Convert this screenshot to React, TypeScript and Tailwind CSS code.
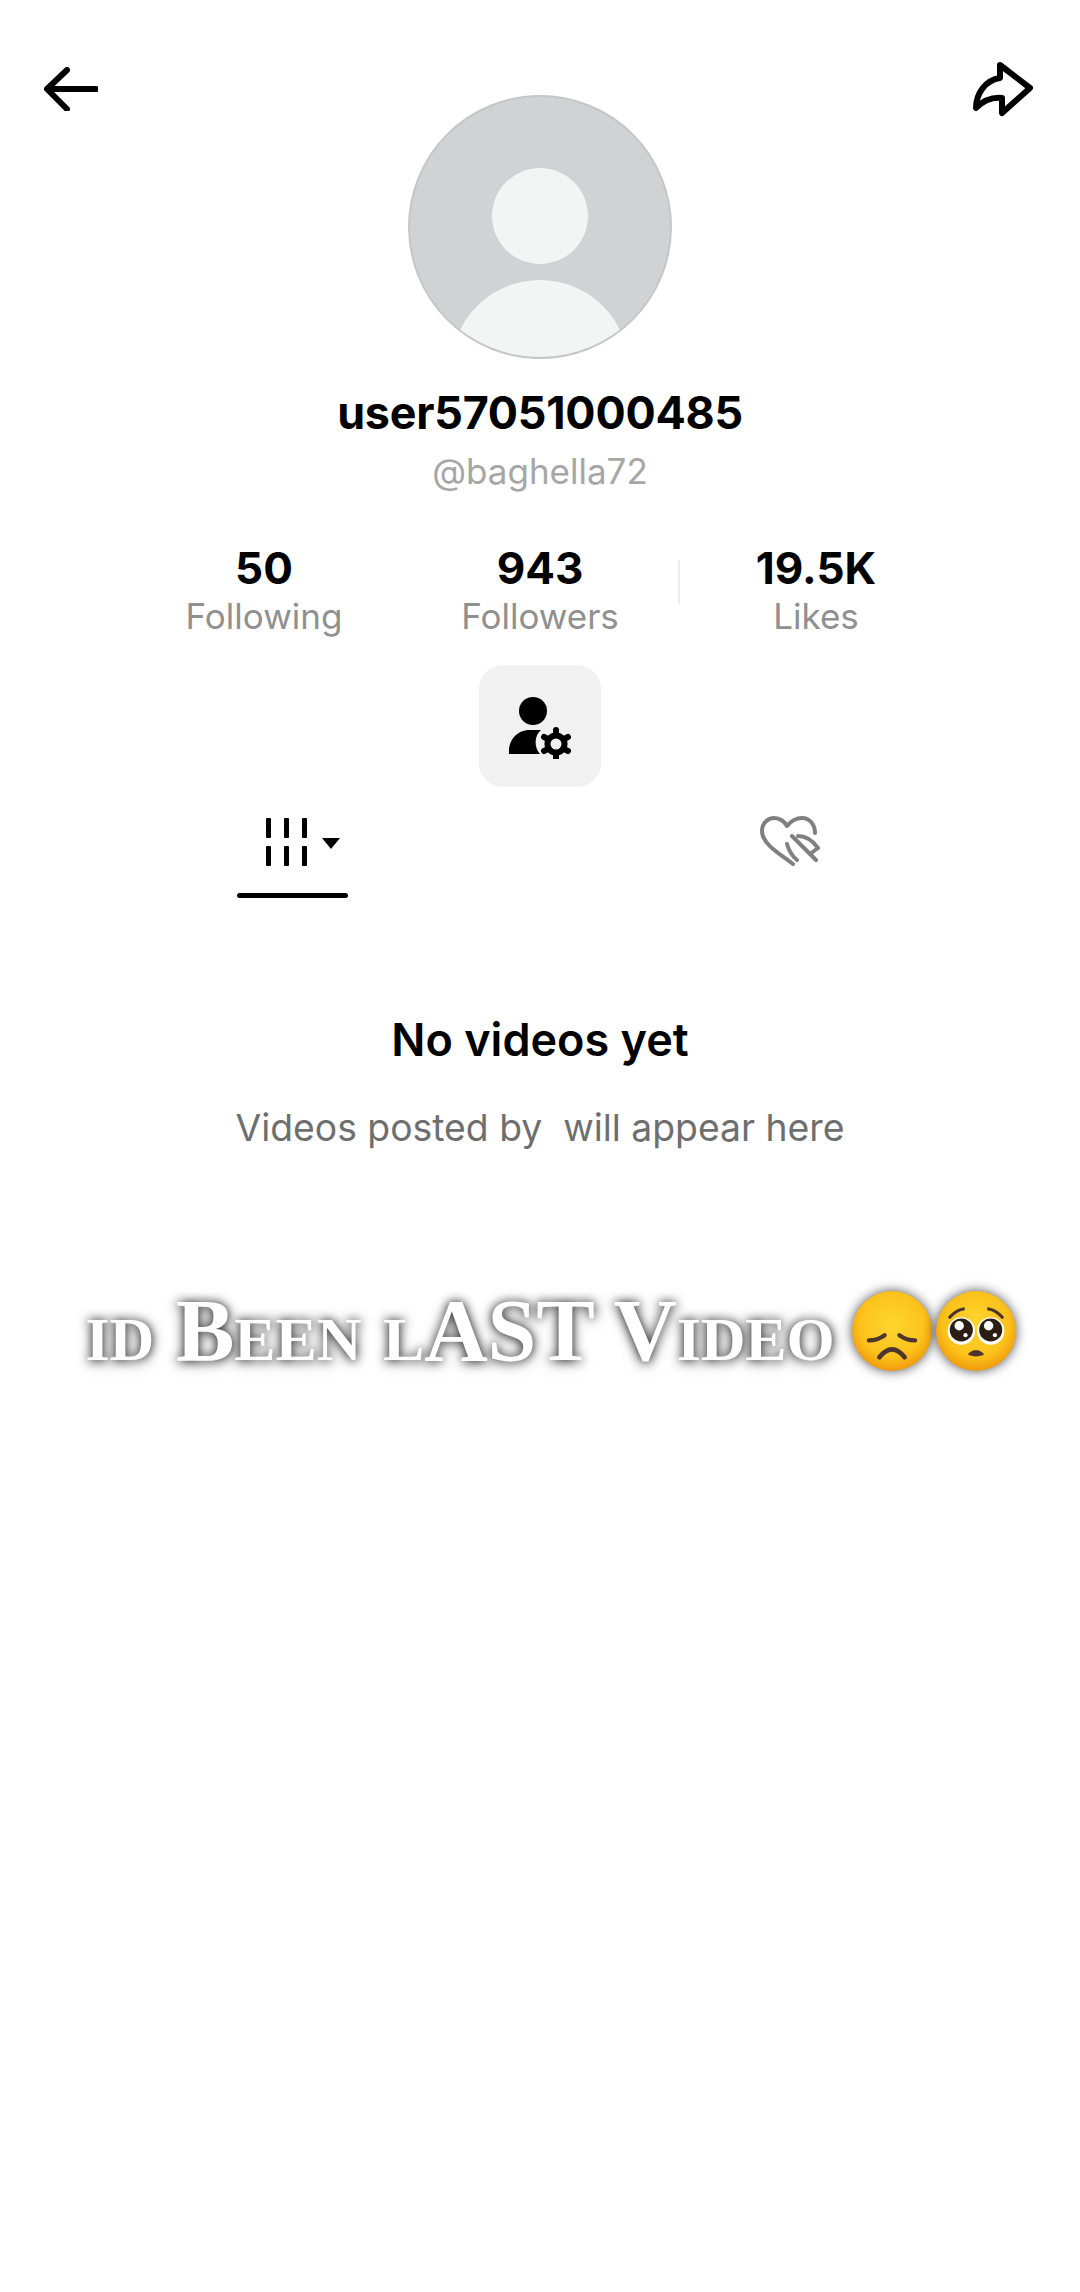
const stats = [
  { value: "50", label: "Following" },
  { value: "943", label: "Followers" },
  { value: "19.5K", label: "Likes" },
];

const EmojiBase = ({ id }: { id: string }) => (
  <>
    <defs>
      <radialGradient id={id} cx="50%" cy="42%" r="58%">
        <stop offset="0%" stopColor="#fed62f" />
        <stop offset="70%" stopColor="#fcc21b" />
        <stop offset="100%" stopColor="#f19a0c" />
      </radialGradient>
    </defs>
    <circle cx="40" cy="40" r="38" fill={`url(#${id})`} />
  </>
);

const SadFace = () => (
  <svg viewBox="0 0 80 80" className="w-[84px] h-[84px] drop-shadow-[0_0_6px_rgba(0,0,0,0.7)]">
    <EmojiBase id="sad" />
    <path d="M18 49Q26 49 33 44M62 49Q54 49 47 44" fill="none" stroke="#4e342e" strokeWidth="4" strokeLinecap="round" />
    <path d="M28 65Q40 50 52 65" fill="none" stroke="#4e342e" strokeWidth="4.5" strokeLinecap="round" />
  </svg>
);

const PleadingFace = () => (
  <svg viewBox="0 0 80 80" className="w-[84px] h-[84px] drop-shadow-[0_0_6px_rgba(0,0,0,0.7)]">
    <EmojiBase id="pleading" />
    <path d="M15 27Q21 20 28 19M65 27Q59 20 52 19" fill="none" stroke="#4e342e" strokeWidth="3" strokeLinecap="round" />
    <circle cx="26" cy="40" r="13" fill="#fff" />
    <circle cx="54" cy="40" r="13" fill="#fff" />
    <circle cx="26" cy="39" r="11" fill="#2b1d14" />
    <circle cx="54" cy="39" r="11" fill="#2b1d14" />
    <circle cx="24" cy="35" r="4.5" fill="#fff" />
    <circle cx="52" cy="35" r="4.5" fill="#fff" />
    <circle cx="30" cy="44" r="2" fill="#fff" />
    <circle cx="58" cy="44" r="2" fill="#fff" />
    <path d="M34 62q6-5 12 0q-6 2-12 0z" fill="#4e342e" stroke="#4e342e" strokeWidth="2.5" strokeLinejoin="round" />
  </svg>
);

export default function App() {
  return (
    <div className="w-[1080px] h-[2292px] bg-white overflow-hidden font-['Inter','Liberation_Sans',sans-serif]">
      <div className="flex justify-between items-start pl-[44px] pr-[46px] pt-[61px] h-[95px]">
        <svg viewBox="0 0 54 44" className="w-[54px] h-[44px] mt-[6px]" fill="none" stroke="#000" strokeWidth="6" strokeLinecap="round" strokeLinejoin="round">
          <path d="M52 22H4M23 3 3 22l20 20" />
        </svg>
        <svg viewBox="0 0 62 56" className="w-[62px] h-[56px]" fill="none" stroke="#000" strokeWidth="6" strokeLinejoin="round">
          <path d="M28 4 58 27 30 52V37C20 36 11 40 4 47 4 32 14 19 28 17Z" />
        </svg>
      </div>

      <div className="flex flex-col items-center">
        <div className="relative w-[264px] h-[264px] rounded-full bg-[#d0d2d4] border-2 border-[#c4c6c8] overflow-hidden">
          <div className="absolute left-[82px] top-[71px] w-[96px] h-[96px] rounded-full bg-[#f3f4f4]" />
          <div className="absolute left-[41px] top-[183px] w-[178px] h-[178px] rounded-full bg-[#f3f4f4]" />
        </div>

        <div className="mt-[32px] text-[44.8px] leading-[44px] font-bold text-black tracking-[-0.2px]">user57051000485</div>
        <div className="mt-[16px] text-[35px] leading-[40px] text-[#a6a6a6]">@baghella72</div>

        <div className="mt-[53px] w-[828px] grid grid-cols-3 relative">
          {stats.map((s) => (
            <div key={s.label} className="flex flex-col items-center">
              <div className="text-[44px] leading-[48px] font-bold text-black">{s.value}</div>
              <div className="text-[35px] leading-[48px] text-[#909090]">{s.label}</div>
            </div>
          ))}
          <div className="absolute left-[552px] top-[16px] w-[2px] h-[44px] bg-[#ececec]" />
        </div>

        <div className="mt-[25px] w-[122px] h-[122px] rounded-[24px] bg-[#f1f1f1] flex items-center justify-center">
          <svg viewBox="0 0 64 66" className="w-[64px] h-[66px]">
            <circle cx="25" cy="18" r="14" fill="#000" />
            <path d="M1 61C0 47 9 37 22 37H33C26 43 26 54 32 61Z" fill="#000" />
            <g fill="none" stroke="#000">
              <circle cx="48" cy="51" r="8.5" strokeWidth="6" />
              <path d="M48 37v2M48 63v2M36 44l2 1M58 57l2 1M36 58l2-1M58 45l2-1" strokeWidth="6" strokeLinecap="round" />
            </g>
          </svg>
        </div>
      </div>

      <div className="flex items-start h-[104px] mt-[12px] pl-[237px]">
        <div className="flex flex-col w-[111px]">
          <div className="flex items-start h-[75px] mt-[19px] pl-[29px]">
            <svg viewBox="0 0 42 48" className="w-[42px] h-[48px]" fill="#000">
              <rect x="0" y="0" width="5" height="20" rx="1" />
              <rect x="18" y="0" width="5" height="20" rx="1" />
              <rect x="36" y="0" width="5" height="20" rx="1" />
              <rect x="0" y="28" width="5" height="20" rx="1" />
              <rect x="18" y="28" width="5" height="20" rx="1" />
              <rect x="36" y="28" width="5" height="20" rx="1" />
            </svg>
            <svg viewBox="0 0 18 11" className="w-[18px] h-[11px] mt-[20px] ml-[14px]" fill="#000">
              <path d="M0 0h18L9 11Z" />
            </svg>
          </div>
          <div className="w-[111px] h-[5px] rounded-full bg-black" />
        </div>
        <svg viewBox="0 0 60 52" className="w-[60px] h-[52px] mt-[17px] ml-[412px]" fill="none" stroke="#808080" strokeWidth="4" strokeLinecap="round" strokeLinejoin="round">
          <path d="M33 48C20 38 2 28 2 15 2 7 8 2 14 2 20 2 25 6 27 10 31 5 36 2 42 2 50 2 55 9 55 17" />
          <path d="M32 20 56 44M27 28C29 35 32 40 37 44M38 20C46 20 53 25 58 32L50 38" />
        </svg>
      </div>

      <div className="mt-[111px] flex flex-col items-center">
        <div className="text-[45px] leading-[52px] font-semibold text-black">No videos yet</div>
        <div className="mt-[36px] text-[37.3px] leading-[52px] text-[#6e6e6e]">Videos posted by&nbsp; will appear here</div>
      </div>

      <div className="mt-[132px] pl-[24px] flex items-center justify-center">
        <div className="text-[88px] leading-[90px] font-bold text-white font-['Liberation_Serif',serif] [font-variant:small-caps] tracking-[-0.2px] [text-shadow:0_0_10px_rgba(0,0,0,0.7),0_2px_14px_rgba(0,0,0,0.5)]">
          id Been lAST Video
        </div>
        <div className="flex ml-[16px]">
          <SadFace />
          <PleadingFace />
        </div>
      </div>
    </div>
  );
}
